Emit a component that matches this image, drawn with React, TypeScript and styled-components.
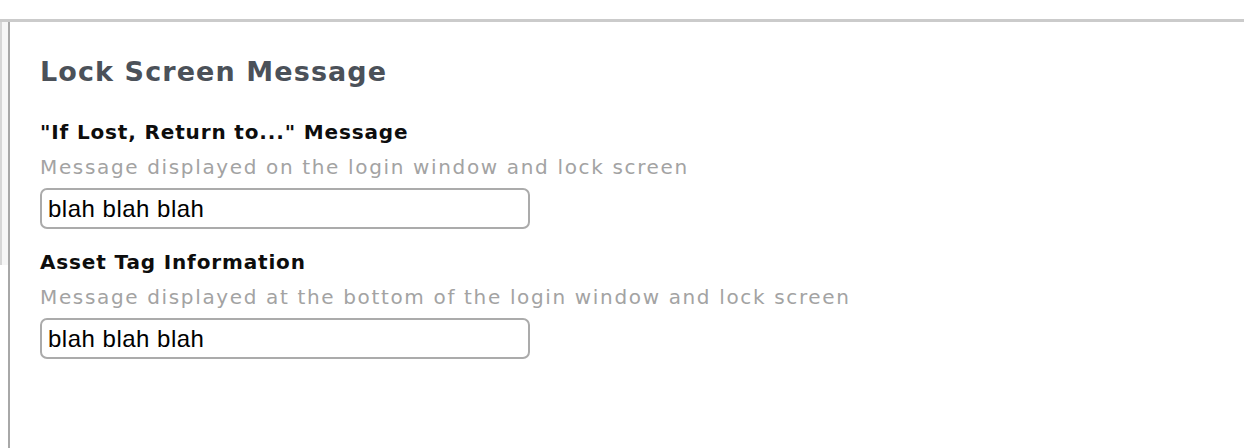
import React from "react"
import styled, { createGlobalStyle } from "styled-components"

const GlobalStyle = createGlobalStyle`
  html, body {
    margin: 0;
    padding: 0;
    background: #ffffff;
  }
  body {
    font-family: "DejaVu Sans", "Liberation Sans", sans-serif;
  }
`;

const Frame = styled.div`
  width: 1244px;
  height: 448px;
  display: flex;
  flex-direction: column;
  overflow: hidden;
`;

const TopSpace = styled.div`
  height: 19px;
  flex-shrink: 0;
`;

const TopRule = styled.div`
  height: 3px;
  background: #cbcbcb;
  flex-shrink: 0;
`;

const Body = styled.div`
  flex: 1;
  display: flex;
`;

const SideStrip = styled.div`
  width: 8px;
  height: 243px;
  border-left: 2px solid #d6d6d6;
  box-sizing: border-box;
  background: #f6f6f6;
`;

const Divider = styled.div`
  width: 2px;
  background: #a8a8a8;
`;

const Content = styled.section`
  flex: 1;
  padding: 34px 0 0 30px;
  display: flex;
  flex-direction: column;
`;

const Heading = styled.h2`
  margin: 0 0 29px;
  font-size: 27px;
  line-height: 32px;
  font-weight: bold;
  letter-spacing: 1.1px;
  color: #4b5159;
`;

const Field = styled.div`
  display: flex;
  flex-direction: column;
  margin-bottom: 18px;
`;

const Label = styled.label`
  font-size: 20px;
  line-height: 31px;
  font-weight: bold;
  letter-spacing: 0.85px;
  color: #0d0d0d;
`;

const Hint = styled.div`
  margin: 3px 0 4px;
  font-size: 20px;
  line-height: 33px;
  letter-spacing: 1.65px;
  color: #a3a3a3;
`;

const TextBox = styled.input`
  width: 490px;
  height: 41px;
  box-sizing: border-box;
  border: 2px solid #ababab;
  border-radius: 7px;
  padding: 0 6px;
  font-family: "Liberation Sans", Arial, sans-serif;
  font-size: 24px;
  letter-spacing: 0.5px;
  color: #000000;
  background: #ffffff;
  outline: none;
`;

const fields = [
  {
    label: "\"If Lost, Return to...\" Message",
    hint: "Message displayed on the login window and lock screen",
    value: "blah blah blah",
  },
  {
    label: "Asset Tag Information",
    hint: "Message displayed at the bottom of the login window and lock screen",
    value: "blah blah blah",
  },
];

const App = () => {
  return (
    <Frame>
      <GlobalStyle />
      <TopSpace />
      <TopRule />
      <Body>
        <SideStrip />
        <Divider />
        <Content>
          <Heading>Lock Screen Message</Heading>
          {fields.map((f) => (
            <Field key={f.label}>
              <Label>{f.label}</Label>
              <Hint>{f.hint}</Hint>
              <TextBox defaultValue={f.value} />
            </Field>
          ))}
        </Content>
      </Body>
    </Frame>
  );
};

export default App;
